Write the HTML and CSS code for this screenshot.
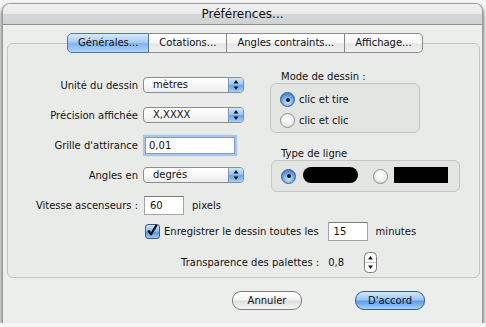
FILE: index.html
```html
<!DOCTYPE html>
<html>
<head>
  <meta charset="UTF-8">
  <title>Préférences</title>
  <link rel="stylesheet" href="styles.css">
</head>
<body>
  <div class="window">
    <div class="titlebar">Préférences...</div>

    <div class="content">
      <div class="tabs">
        <span class="tab selected">Générales...</span>
        <span class="tab">Cotations...</span>
        <span class="tab">Angles contraints...</span>
        <span class="tab">Affichage...</span>
      </div>

      <div class="panel">
        <div class="columns">
          <div class="settings">
            <label>Unité du dessin</label>
            <div class="popup">mètres
              <span class="popup-arrows"><svg width="14" height="16" viewBox="0 0 14 16"><polygon points="7,3 9.5,6.5 4.5,6.5"/><polygon points="4.5,9.5 9.5,9.5 7,13"/></svg></span>
            </div>

            <label>Précision affichée</label>
            <div class="popup">X,XXXX
              <span class="popup-arrows"><svg width="14" height="16" viewBox="0 0 14 16"><polygon points="7,3 9.5,6.5 4.5,6.5"/><polygon points="4.5,9.5 9.5,9.5 7,13"/></svg></span>
            </div>

            <label>Grille d'attirance</label>
            <div class="field focused">0,01</div>

            <label>Angles en</label>
            <div class="popup">degrés
              <span class="popup-arrows"><svg width="14" height="16" viewBox="0 0 14 16"><polygon points="7,3 9.5,6.5 4.5,6.5"/><polygon points="4.5,9.5 9.5,9.5 7,13"/></svg></span>
            </div>

            <label>Vitesse ascenseurs :</label>
            <div class="inline">
              <div class="field small">60</div>
              <span class="unit">pixels</span>
            </div>
          </div>

          <div class="groups">
            <div class="group-title">Mode de dessin :</div>
            <div class="group mode">
              <div class="radio-row"><span class="radio on"></span>clic et tire</div>
              <div class="radio-row"><span class="radio"></span>clic et clic</div>
            </div>

            <div class="group-title second">Type de ligne</div>
            <div class="group lines">
              <span class="radio on"></span>
              <span class="line rounded"></span>
              <span class="radio"></span>
              <span class="line square"></span>
            </div>
          </div>
        </div>

        <div class="autosave">
          <span class="checkbox"><svg width="15" height="15" viewBox="0 0 15 15"><path d="M3.5 7.5 L6.5 11.5 L12.5 1.5" fill="none" stroke="#111" stroke-width="2.4" stroke-linejoin="round"/></svg></span>
          <span class="autosave-text">Enregistrer le dessin toutes les</span>
          <div class="field small">15</div>
          <span class="unit">minutes</span>
        </div>

        <div class="transparency">
          <span>Transparence des palettes :</span>
          <span class="value">0,8</span>
          <span class="stepper"><svg width="13" height="21" viewBox="0 0 13 21"><rect x="0.5" y="0.5" width="12" height="20" rx="4" fill="#fbfbfb" stroke="#7a7a7a"/><line x1="1" y1="10.5" x2="12" y2="10.5" stroke="#c8c8c8"/><polygon points="6.5,4 8.8,7.5 4.2,7.5" fill="#111"/><polygon points="4.2,13.5 8.8,13.5 6.5,17" fill="#111"/></svg></span>
        </div>
      </div>

      <div class="buttons">
        <button class="aqua">Annuler</button>
        <button class="aqua default">D'accord</button>
      </div>
    </div>
  </div>
</body>
</html>
```

FILE: styles.css
```css
body {
  background: #f6f6f6;
  color: #111111;
  font-family: "DejaVu Sans", sans-serif;
  font-size: 10px;
  margin: 0px;
}

.window {
  background: #eceeec;
  border: 1px solid #9c9c9c;
  border-bottom: none;
  border-radius: 8px 8px 0px 0px;
  box-shadow: 0px 3px 4px rgba(0, 0, 0, 0.75);
  box-sizing: border-box;
  height: 320px;
  margin: 3px 0px 0px 2px;
  overflow: hidden;
  width: 481px;
}

.titlebar {
  background: linear-gradient(#f2f2f2 0%, #e8e9e9 48%, #d4d7d7 52%, #d0d3d3 100%);
  border-bottom: 1px solid #8e8e8e;
  font-size: 12px;
  height: 20px;
  line-height: 20px;
  text-align: center;
}

.content {
  padding: 8px 2px 0px 4px;
}

/* segmented tab control */
.tabs {
  display: flex;
  margin: 0px 0px -10px 60px;
  position: relative;
  width: max-content;
  z-index: 1;
}

.tab {
  background: linear-gradient(#ffffff 0%, #f6f6f6 50%, #e6e6e6 55%, #f2f2f2 100%);
  border: 1px solid #8a8a8a;
  border-left: none;
  height: 18px;
  line-height: 18px;
  padding: 0px 10px;
}

.tab:first-child {
  border-left: 1px solid #6c7f99;
  border-radius: 5px 0px 0px 5px;
}

.tab:last-child {
  border-radius: 0px 5px 5px 0px;
}

.tab.selected {
  background: linear-gradient(#d6e8fb 0%, #a9cdf4 45%, #7fb3ee 55%, #b2d6fa 100%);
  border-color: #56759e;
}

.panel {
  background: #e9ebe9;
  border: 1px solid #c2c4c2;
  border-radius: 6px;
  box-sizing: border-box;
  height: 235px;
}

.columns {
  display: grid;
  grid-template-columns: 262px auto;
  padding-top: 26px;
}

.settings {
  display: grid;
  grid-template-columns: 130px auto;
  grid-auto-rows: 20px;
  column-gap: 5px;
  row-gap: 10px;
  margin-top: 5px;
}

.settings label {
  align-self: center;
  text-align: right;
}

.popup {
  align-self: center;
  background: linear-gradient(#ffffff 0%, #f7f7f7 50%, #ececec 100%);
  border: 1px solid #8c8c8c;
  border-radius: 4px;
  box-sizing: border-box;
  display: flex;
  height: 16px;
  justify-content: space-between;
  line-height: 14px;
  padding-left: 9px;
  width: 101px;
}

.popup-arrows {
  background: linear-gradient(#d2e6fb 0%, #9ac6f5 45%, #6aa6ec 55%, #a6d0f8 100%);
  border-left: 1px solid #7d93b1;
  border-radius: 0px 3px 3px 0px;
  display: flex;
  height: 14px;
  width: 14px;
}

.popup-arrows svg {
  fill: #151515;
  margin-top: -1px;
}

.field {
  align-self: center;
  background: #ffffff;
  border: 1px solid #a4a4a4;
  border-top-color: #7c7c7c;
  box-sizing: border-box;
  height: 17px;
  line-height: 15px;
  padding-left: 3px;
  width: 90px;
}

.field.focused {
  border-color: #7f9cc2;
  box-shadow: 0px 0px 1px 2px #a9c5e8;
  margin-left: 2px;
}

.field.small {
  height: 19px;
  line-height: 17px;
  padding-left: 5px;
  width: 40px;
}

.inline {
  align-items: center;
  display: flex;
  margin-left: 1px;
}

.unit {
  margin-left: 8px;
}

/* right hand groups */
.group-title {
  line-height: 13px;
  padding-left: 11px;
}

.group-title.second {
  margin-top: 14px;
}

.group {
  background: #e3e5e3;
  border: 1px solid #c4c6c4;
  border-radius: 6px;
  box-sizing: border-box;
}

.group.mode {
  display: flex;
  flex-direction: column;
  gap: 6px;
  height: 50px;
  padding: 8px 0px 0px 9px;
  width: 150px;
}

.radio-row {
  align-items: center;
  display: flex;
  gap: 4px;
  height: 15px;
}

.radio {
  background: radial-gradient(circle at 50% 35%, #ffffff 0%, #f2f2f2 50%, #d8d8d8 100%);
  border: 1px solid #8a8a8a;
  border-radius: 50%;
  box-sizing: border-box;
  display: inline-block;
  height: 15px;
  position: relative;
  width: 15px;
}

.radio.on {
  background: radial-gradient(circle at 50% 70%, #c2e2ff 0%, #78b2f0 45%, #3f82d8 75%, #86b6ea 100%);
  border-color: #3d5b88;
}

.radio.on::after {
  background: #111111;
  border-radius: 50%;
  content: "";
  height: 4px;
  left: 4.5px;
  position: absolute;
  top: 4.5px;
  width: 4px;
}

.group.lines {
  align-items: center;
  display: flex;
  height: 32px;
  margin-left: 1px;
  padding-left: 9px;
  width: 189px;
}

.line {
  background: #000000;
  display: inline-block;
  height: 16px;
}

.line.rounded {
  border-radius: 8px;
  margin: -3px 15px 0px 7px;
  width: 55px;
}

.line.square {
  margin: -3px 0px 0px 6px;
  width: 54px;
}

/* bottom rows */
.autosave {
  align-items: center;
  display: flex;
  height: 20px;
  margin: 6px 0px 0px 137px;
}

.checkbox {
  background: linear-gradient(#cde4fb 0%, #8fc0f2 45%, #5c9ae6 60%, #9ccaf6 100%);
  border: 1px solid #3d5b88;
  border-radius: 3px;
  box-sizing: border-box;
  display: inline-flex;
  height: 15px;
  width: 15px;
}

.checkbox svg {
  margin: -2px 0px 0px -1px;
}

.autosave-text {
  margin: 0px 9px 0px 4px;
}

.transparency {
  align-items: center;
  display: flex;
  height: 21px;
  margin: 11px 0px 0px 173px;
}

.value {
  margin: 0px 20px 0px 9px;
}

.stepper {
  display: inline-flex;
}

.buttons {
  display: flex;
  gap: 53px;
  margin: 13px 0px 0px 225px;
}

button.aqua {
  background: linear-gradient(#ffffff 0%, #f4f4f4 45%, #dedede 55%, #f6f6f6 100%);
  border: 1px solid #7e7e7e;
  border-radius: 9px;
  color: #111111;
  font-family: "DejaVu Sans", sans-serif;
  font-size: 10px;
  height: 19px;
  padding: 0px;
  width: 70px;
}

button.aqua.default {
  background: linear-gradient(#d4e8fc 0%, #98c6f6 45%, #5e9ee8 55%, #a6d2fa 100%);
  border-color: #3c5c8c;
}
```
